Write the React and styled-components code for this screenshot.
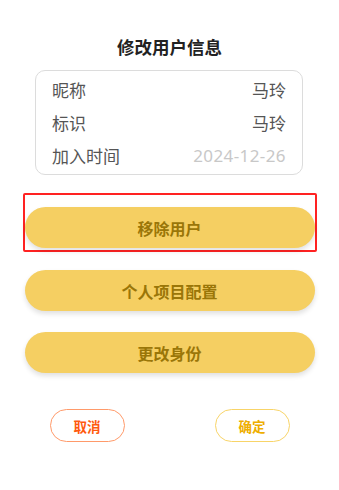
import React from "react";
import styled, { createGlobalStyle } from "styled-components";

const GlobalStyle = createGlobalStyle`
  body {
    margin: 0;
    background: #fff;
    font-family: "Noto Sans", "Noto Sans CJK SC", sans-serif;
  }
`;

const rows = [
  { label: "昵称", value: "马玲" },
  { label: "标识", value: "马玲" },
  { label: "加入时间", value: "2024-12-26", muted: true },
];

export default function App() {
  return (
    <>
      <GlobalStyle />
      <Page>
        <Title>修改用户信息</Title>
        <InfoBox>
          {rows.map((r) => (
            <Row key={r.label}>
              <Label>{r.label}</Label>
              <Value $muted={r.muted}>{r.value}</Value>
            </Row>
          ))}
        </InfoBox>
        <Highlight>
          <Action>移除用户</Action>
        </Highlight>
        <Action $top={18}>个人项目配置</Action>
        <Action $top={21}>更改身份</Action>
        <Footer>
          <Outline $color="#ff5a10" $border="#ff9a6a">取消</Outline>
          <Outline $color="#eeae00" $border="#f8d468">确定</Outline>
        </Footer>
      </Page>
    </>
  );
}

const Page = styled.div`
  width: 339px;
  box-sizing: border-box;
  padding: 36px 0 0;
  display: flex;
  flex-direction: column;
  align-items: center;
`;

const Title = styled.h1`
  margin: 0 0 12px;
  font-size: 17.5px;
  line-height: 22px;
  font-weight: 700;
  color: #222;
`;

const InfoBox = styled.div`
  width: 268px;
  box-sizing: border-box;
  border: 1px solid #dcdcdc;
  border-radius: 10px;
  padding: 2px 16px;
  align-self: flex-start;
  margin-left: 35px;
`;

const Row = styled.div`
  height: 33px;
  display: flex;
  align-items: center;
  justify-content: space-between;
  font-size: 17px;
`;

const Label = styled.span`
  color: #555;
`;

const Value = styled.span`
  color: ${(p) => (p.$muted ? "#c8c8c8" : "#555")};
  letter-spacing: ${(p) => (p.$muted ? "0.4px" : "0")};
`;

const Highlight = styled.div`
  margin-top: 18px;
  width: 294px;
  box-sizing: border-box;
  border: 2px solid #ff2222;
  border-radius: 2px;
  padding: 12px 0 2px;
  display: flex;
  justify-content: center;
`;

const Action = styled.button`
  margin-top: ${(p) => (p.$top ? p.$top : 0)}px;
  width: 290px;
  height: 41px;
  border: none;
  border-radius: 21px;
  background: #f5cf62;
  color: #9a7608;
  font-family: inherit;
  font-size: 16px;
  font-weight: 700;
  box-shadow: 0 3px 5px rgba(0, 0, 0, 0.12);
  cursor: pointer;
`;

const Footer = styled.div`
  margin-top: 36px;
  width: 240px;
  display: flex;
  justify-content: space-between;
`;

const Outline = styled.button`
  width: 75px;
  height: 33px;
  box-sizing: border-box;
  border: 1.5px solid ${(p) => p.$border};
  border-radius: 17px;
  background: #fff;
  color: ${(p) => p.$color};
  font-family: inherit;
  font-size: 13.5px;
  font-weight: 700;
  cursor: pointer;
`;
